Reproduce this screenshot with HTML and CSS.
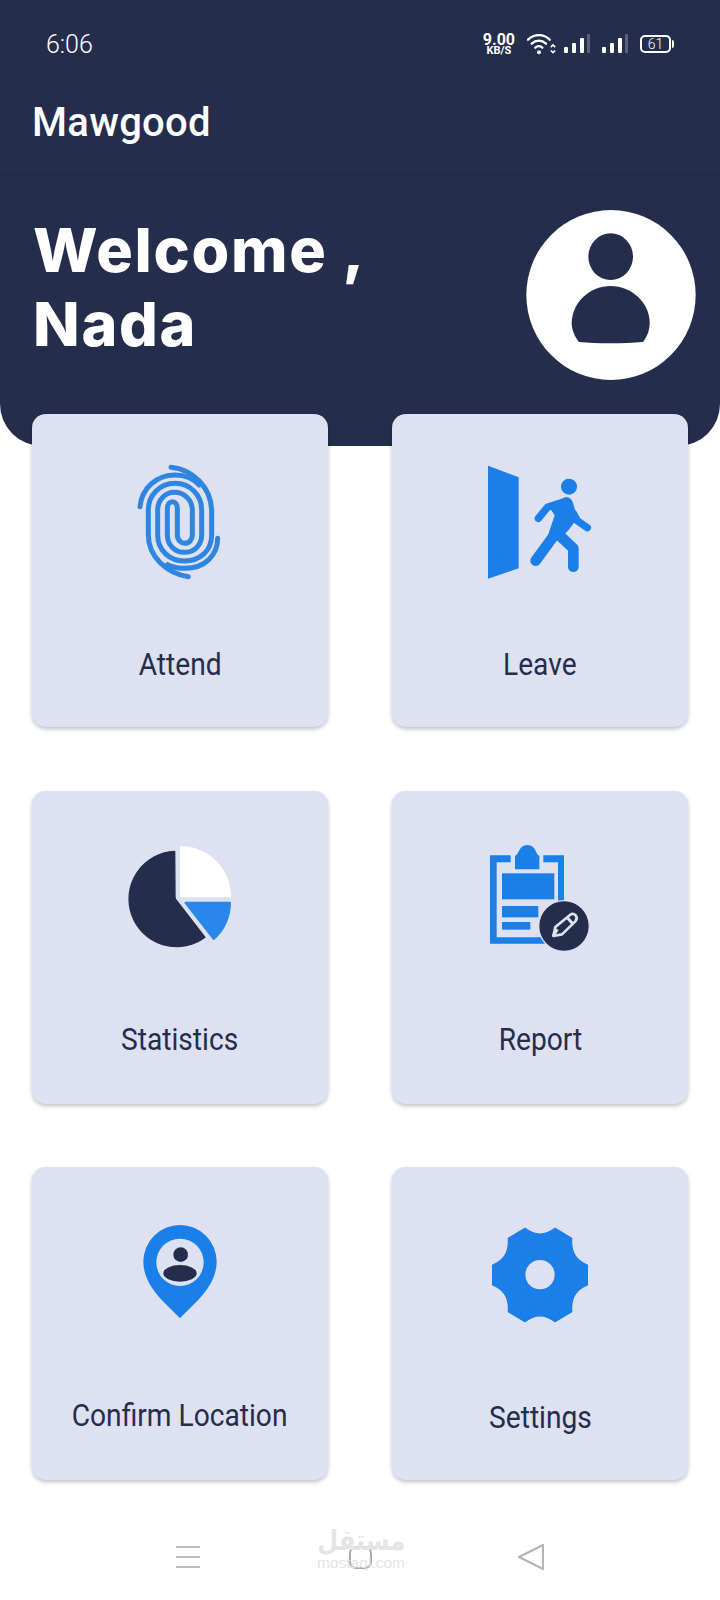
FILE: index.html
```html
<!DOCTYPE html>
<html lang="en">

<head>
      <meta charset="UTF-8">
      <meta name="viewport" content="width=device-width, initial-scale=1.0">
      <title>Mawgood</title>
      <link rel="stylesheet" href="styles.css">
</head>

<body>
      <header class="header">
            <div class="status-bar">
                  <span class="clock">6:06</span>
                  <div class="status-icons">
                        <div class="net-speed"><span class="net-value">9.00</span><span class="net-unit">KB/S</span></div>
                        <svg class="wifi" width="30" height="22" viewBox="0 0 90 66" fill="none" stroke="#fff" stroke-linecap="round">
                              <path d="M3 20 C22 2 50 2 68 20" stroke-width="7" />
                              <path d="M14 32 C27 20 44 20 57 32" stroke-width="7" />
                              <path d="M25 44 C31 38 40 38 46 44" stroke-width="7" />
                              <circle cx="36" cy="58" r="6" fill="#fff" stroke="none" />
                              <path d="M73 41 L78 36 L83 41 M73 54 L78 59 L83 54" stroke-width="5" />
                        </svg>
                        <svg class="signal" width="26" height="20" viewBox="0 0 26 20">
                              <rect x="0" y="13" width="4" height="6" rx="1" fill="#fff" />
                              <rect x="8" y="9" width="4" height="10" rx="1" fill="#fff" />
                              <rect x="16" y="4" width="4" height="15" rx="1" fill="#fff" />
                              <rect x="23" y="0" width="3" height="19" fill="#5a607a" />
                        </svg>
                        <svg class="signal" width="26" height="20" viewBox="0 0 26 20">
                              <rect x="0" y="13" width="4" height="6" rx="1" fill="#fff" />
                              <rect x="8" y="9" width="4" height="10" rx="1" fill="#fff" />
                              <rect x="16" y="4" width="4" height="15" rx="1" fill="#fff" />
                              <rect x="23" y="0" width="3" height="19" fill="#5a607a" />
                        </svg>
                        <div class="battery"><span>61</span></div>
                  </div>
            </div>
            <div class="app-bar">
                  <h1 class="app-title">Mawgood</h1>
            </div>
            <div class="hero">
                  <h2 class="welcome">Welcome ,<br>Nada</h2>
                  <svg class="avatar" width="170" height="170" viewBox="48 30 508 510">
                        <ellipse cx="302" cy="285" rx="254" ry="255" fill="#fff" />
                        <ellipse cx="301" cy="170" rx="67" ry="70" fill="#252d4c" />
                        <path d="M206 426 C190 405 184 385 184 368 C186 305 240 258 301 258 C365 258 418 310 418 368 C418 390 410 410 398 426 C340 431 260 431 206 426 Z" fill="#252d4c" />
                  </svg>
            </div>
      </header>

      <main class="grid">
            <a class="card">
                  <svg class="card-icon" viewBox="0 0 420 420" fill="none">
                        <g transform="translate(75 30)" stroke="#2f86e0" stroke-width="15" stroke-linecap="round">
                              <path d="M108 22 C170 28 230 80 230 155 V225 C230 272 195 303 148 303 C105 303 68 272 68 225 V150 C68 118 92 97 118 97 C148 97 172 120 172 150 V225 C172 240 162 250 150 250 C138 250 127 240 127 225 V145 C127 133 120 125 112 125 C104 125 97 133 97 145 V225 C97 255 120 277 148 277 C178 277 200 255 200 225 V150 C200 105 165 70 120 70 C75 70 40 105 40 150 V225 C40 290 95 340 160 350" />
                              <path d="M15 140 C20 85 65 45 120 45 C150 45 175 55 192 75" />
                              <path d="M248 235 C248 285 210 325 150 325 C125 325 110 320 98 314" />
                        </g>
                  </svg>
                  <span class="card-label">Attend</span>
            </a>
            <a class="card">
                  <svg class="card-icon" viewBox="0 0 420 420" fill="none">
                        <path d="M54 47 L146 82 V355 L54 386 Z" fill="#1a7fe8" />
                        <circle cx="297" cy="110" r="24" fill="#1a7fe8" />
                        <path d="M232 162 L288 141 Q303 142 309 158 L322 205 L296 240 L264 272 L232 262 L254 196 Z" fill="#1a7fe8" />
                        <g stroke="#1a7fe8" stroke-linecap="round" stroke-linejoin="round">
                              <path d="M205 205 L232 172 L262 162" stroke-width="22" />
                              <path d="M310 190 L322 212 L352 233" stroke-width="22" />
                              <path d="M248 262 L197 332" stroke-width="32" />
                              <path d="M262 250 L310 295 V350" stroke-width="32" />
                        </g>
                  </svg>
                  <span class="card-label">Leave</span>
            </a>
            <a class="card">
                  <svg class="card-icon" viewBox="0 -9 420 420">
                        <path d="M194 64 A143 143 0 1 0 285 322 L200 212 Q195 207 195 200 Z" fill="#252d4c" stroke="#252d4c" stroke-width="4" stroke-linejoin="round" />
                        <path d="M212 50 A151 151 0 0 1 361 200 H212 Z" fill="#fff" stroke="#fff" stroke-width="4" stroke-linejoin="round" />
                        <path d="M226 218 H360 A150 150 0 0 1 311 327 Z" fill="#2a87ea" stroke="#2a87ea" stroke-width="6" stroke-linejoin="round" />
                  </svg>
                  <span class="card-label">Statistics</span>
            </a>
            <a class="card">
                  <svg class="card-icon" viewBox="0 -9 420 420">
                        <path d="M60 76 H122 V97 H80 V322 H264 V97 H220 V76 H282 V341 H60 Z" fill="#1a7fe8" />
                        <path d="M135 118 V78 C148 72 146 45 172 45 C198 45 196 72 208 78 V118 Z" fill="#1a7fe8" />
                        <rect x="96" y="130" width="157" height="78" fill="#1a7fe8" />
                        <rect x="96" y="228" width="109" height="34" fill="#1a7fe8" />
                        <rect x="96" y="276" width="85" height="23" fill="#1a7fe8" />
                        <circle cx="282" cy="288" r="76" fill="#252d4c" stroke="#dde1f2" stroke-width="4" />
                        <path d="M250 318 L256 291 L300 255 Q309 248 317 256 Q324 265 316 274 L276 313 Z" fill="none" stroke="#dde1f2" stroke-width="8" stroke-linejoin="round" />
                        <path d="M292 263 L309 282 M250 318 L262 298" stroke="#dde1f2" stroke-width="9" />
                  </svg>
                  <span class="card-label">Report</span>
            </a>
            <a class="card">
                  <svg class="card-icon" viewBox="-30 -21 420 420">
                        <path d="M180 325 C150 290 70 235 70 155 A110 110 0 0 1 290 155 C290 235 210 290 180 325 Z" fill="#1a7fe8" />
                        <circle cx="180" cy="157" r="71" fill="#dde1f2" />
                        <circle cx="182" cy="134" r="22" fill="#252d4c" />
                        <ellipse cx="180" cy="190" rx="50" ry="25" fill="#252d4c" />
                  </svg>
                  <span class="card-label">Confirm Location</span>
            </a>
            <a class="card">
                  <svg class="card-icon" viewBox="-30 -21 420 420">
                        <path d="M135 55 Q180 90 225 55 L275 85 Q270 145 322 165 V225 Q270 245 275 305 L225 335 Q180 300 135 335 L85 305 Q90 245 38 225 V165 Q90 145 85 85 Z" fill="#1a7fe8" stroke="#1a7fe8" stroke-width="4" stroke-linejoin="round" />
                        <circle cx="180" cy="194" r="44" fill="#dde1f2" />
                  </svg>
                  <span class="card-label">Settings</span>
            </a>
      </main>

      <nav class="nav-bar">
            <div class="watermark">
                  <span class="watermark-ar" dir="rtl">مستقل</span>
                  <span class="watermark-en">mostaql.com</span>
            </div>
            <svg width="24" height="24" viewBox="0 0 24 24" stroke="#bbb" stroke-width="2">
                  <path d="M0 2 H24 M0 12 H24 M0 22 H24" />
            </svg>
            <svg class="nav-home" width="24" height="24" viewBox="0 0 24 24" fill="none" stroke="#aaa" stroke-width="2">
                  <rect x="2" y="2" width="21" height="21" rx="6" />
            </svg>
            <svg width="26" height="26" viewBox="0 0 26 26" fill="none" stroke="#b5b5b5" stroke-width="2.2" stroke-linejoin="round">
                  <path d="M25 1 V25 L1 13 Z" />
            </svg>
      </nav>
</body>

</html>
```
FILE: styles.css
```css
body {
      font-family: Roboto, sans-serif;
      background-color: #fff;
      color: #252d4c;
      margin: 0;
      height: 1600px;
      overflow: hidden;
}

.header {
      background-color: #252d4c;
      color: #fff;
      height: 446px;
      border-radius: 0 0 42px 42px;
}

.status-bar {
      display: flex;
      justify-content: space-between;
      align-items: center;
      height: 64px;
      padding: 12px 46px 0 46px;
}

.clock {
      font-size: 25px;
      font-weight: 300;
}

.status-icons {
      display: flex;
      align-items: center;
      gap: 7px;
}

.net-speed {
      display: flex;
      flex-direction: column;
      align-items: center;
      font-weight: 700;
      margin-right: 5px;
}

.net-value {
      font-size: 16px;
      line-height: 13px;
}

.net-unit {
      font-size: 11px;
      line-height: 10px;
}

.signal {
      margin-right: 5px;
}

.battery {
      position: relative;
      box-sizing: border-box;
      width: 31px;
      height: 18px;
      border: 2px solid #fff;
      border-radius: 5px;
      font-size: 14px;
      font-weight: 300;
      line-height: 14px;
      text-align: center;
      margin-right: 3px;
}

.battery::after {
      content: "";
      position: absolute;
      right: -5px;
      top: 3px;
      width: 2px;
      height: 8px;
      background-color: #fff;
      border-radius: 0 2px 2px 0;
}

.app-bar {
      display: flex;
      align-items: center;
      box-sizing: border-box;
      height: 100px;
      padding: 0 32px 6px;
      border-bottom: 1px solid #222946;
}

.app-title {
      margin: 0;
      font-size: 40px;
      font-weight: 500;
      letter-spacing: 0.3px;
}

.hero {
      display: flex;
      justify-content: space-between;
      padding: 34px 24px 0 33px;
}

.welcome {
      margin: 0;
      font-family: Inter, sans-serif;
      font-size: 61px;
      font-weight: 800;
      line-height: 74px;
      letter-spacing: 1.7px;
      padding-top: 3px;
}

.grid {
      display: grid;
      grid-template-columns: 296px 296px;
      grid-auto-rows: 313px;
      justify-content: space-between;
      row-gap: 63.5px;
      margin-top: -32px;
      padding: 0 32px;
}

.card {
      display: flex;
      flex-direction: column;
      align-items: center;
      background-color: #dde1f2;
      border-radius: 14px;
      box-shadow: 0 2px 4px rgba(0, 0, 0, 0.25);
      padding-top: 36px;
}

.card-icon {
      width: 140px;
      height: 140px;
}

.card-label {
      margin-top: 55px;
      font-size: 32px;
      line-height: 38px;
      transform: scaleX(0.88);
}

.card:nth-child(n+3) .card-label {
      margin-top: 53px;
}

.card:nth-child(6) .card-label {
      margin-top: 55px;
}

.nav-bar {
      position: relative;
      display: flex;
      justify-content: space-between;
      align-items: center;
      padding: 64px 176px 0 176px;
}

.nav-home {
      margin-left: 2px;
}

.watermark {
      position: absolute;
      left: 317px;
      top: 46px;
      width: 88px;
      display: flex;
      flex-direction: column;
      align-items: center;
      color: #e4e4e4;
}

.watermark-ar {
      font-family: "DejaVu Sans", sans-serif;
      font-size: 28px;
      font-weight: 700;
      line-height: 30px;
      transform: scaleX(0.86);
}

.watermark-en {
      font-family: "Liberation Sans", sans-serif;
      font-size: 15.5px;
      line-height: 14px;
}
```
